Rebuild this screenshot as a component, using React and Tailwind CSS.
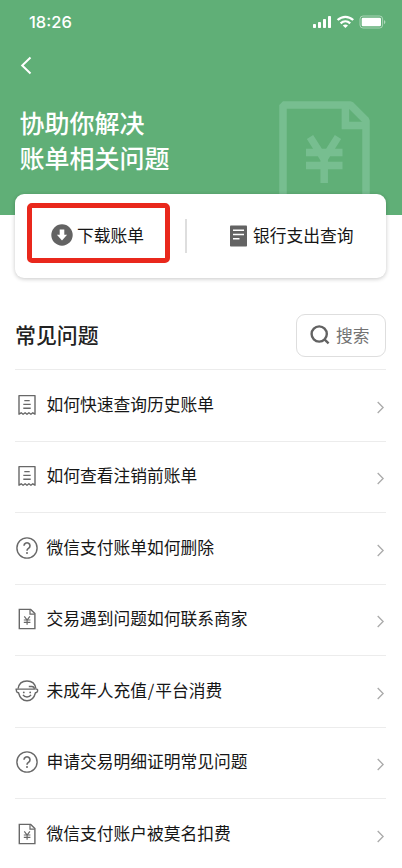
import React from 'react';

const questions = [
  { icon: 'receipt', label: '如何快速查询历史账单' },
  { icon: 'receipt', label: '如何查看注销前账单' },
  { icon: 'help', label: '微信支付账单如何删除' },
  { icon: 'file', label: '交易遇到问题如何联系商家' },
  { icon: 'kid', label: '未成年人充值/平台消费' },
  { icon: 'help', label: '申请交易明细证明常见问题' },
  { icon: 'file', label: '微信支付账户被莫名扣费' },
];

function ReceiptIcon() {
  return (
    <svg width="24" height="24" viewBox="0 0 24 24" fill="none" stroke="#686868" strokeWidth="1.4">
      <path d="M4 21.2V2.6h16v18.6l-2.2-1.4-1.9 1.5-2-1.5-1.9 1.5-1.9-1.5-2 1.5-1.9-1.5z" strokeLinejoin="round" />
      <path d="M9.3 7.6h5.4M8.3 11.4h7.4M8.3 15.2h7.4" />
    </svg>
  );
}

function HelpIcon() {
  return (
    <svg width="24" height="24" viewBox="0 0 24 24" fill="none" stroke="#686868" strokeWidth="1.4">
      <circle cx="12" cy="12" r="10.1" />
      <path d="M9 9.8a3 3 0 1 1 4.5 2.6c-1 .6-1.5 1.1-1.5 2.3" strokeWidth="1.6" />
      <circle cx="12" cy="17.1" r="1" fill="#686868" stroke="none" />
    </svg>
  );
}

function FileIcon() {
  return (
    <svg width="24" height="24" viewBox="0 0 24 24" fill="none" stroke="#686868" strokeWidth="1.4">
      <path d="M4.3 2.4h11.4l4.2 4.2v15H4.3z" />
      <path d="M15 2.6v4.6h4.7" strokeWidth="1.2" />
      <path d="M9.3 9.4l2.8 3.6 2.8-3.6M8.8 13h6.6M8.8 15.3h6.6M12.1 13v4.7" strokeWidth="1.2" />
    </svg>
  );
}

function KidIcon() {
  return (
    <svg width="24" height="24" viewBox="0 0 24 24" fill="none" stroke="#686868" strokeWidth="1.4">
      <path d="M3.1 9.7C3.8 4.8 7.3 2 12 2s8.2 2.8 8.9 7.7" />
      <path d="M.6 10.1h18.7c.1-1.8-.9-2.6-2.5-2.6h-3" />
      <path d="M20.3 10.1h1.2c1.2 0 1.3 1.1 1 2.1-.3 1-1 1.5-2 1.5-1.2 4.6-4.2 8-8.5 8s-7.3-3.4-8.5-8c-1 0-1.7-.5-2-1.5-.2-.9-.3-1.7-.1-2.2" />
      <path d="M8 15.9c1.6 2.8 6.4 2.8 8 0" />
      <circle cx="8.8" cy="13.4" r=".9" fill="#686868" stroke="none" />
      <circle cx="15.2" cy="13.4" r=".9" fill="#686868" stroke="none" />
    </svg>
  );
}

const icons = { receipt: ReceiptIcon, help: HelpIcon, file: FileIcon, kid: KidIcon };

function StatusBar() {
  return (
    <div className="flex h-11 items-center justify-between pl-[29px] pr-4">
      <span className="font-['Inter'] text-[16.5px] font-medium leading-none">18:26</span>
      <svg width="73" height="14" viewBox="0 0 73 14" fill="#fff">
        <rect x="0" y="9" width="3" height="4" rx=".7" />
        <rect x="5" y="7" width="3" height="6" rx=".7" />
        <rect x="10" y="4" width="3" height="9" rx=".7" />
        <rect x="15" y="1" width="3" height="12" rx=".7" />
        <g fill="none" stroke="#fff" strokeWidth="2.3">
          <path d="M24.6 5c4.6-4.3 11-4.3 15.6 0" />
          <path d="M27.6 8.3c2.9-2.7 6.7-2.7 9.6 0" />
        </g>
        <path d="M32.4 13l-2.6-2.6c1.4-1.3 3.8-1.3 5.2 0z" />
        <rect x="47" y="1" width="22.6" height="12" rx="3" fill="none" stroke="#fff" strokeOpacity=".45" />
        <rect x="48.7" y="2.7" width="19.3" height="8.6" rx="1.2" />
        <path d="M71 5c1.9.8 1.9 3.4 0 4.2z" fillOpacity=".5" />
      </svg>
    </div>
  );
}

function Header() {
  return (
    <header className="relative h-[215px] overflow-hidden bg-[#60af77] text-white">
      <svg className="absolute left-[279px] top-[101px]" width="92" height="114" viewBox="0 0 92 114" fill="none" stroke="#77be90" strokeWidth="7.5">
        <path d="M4 114V4h67.5L87 19.5V114" strokeLinejoin="bevel" />
        <path d="M66.4 4v20.6H87" />
        <path d="M31 36l14 22 14-22M27 51.5h36.5M27 64.5h36.5M45.2 52v30" />
      </svg>
      <StatusBar />
      <svg className="mt-3 ml-5" width="12" height="19" viewBox="0 0 12 19" fill="none" stroke="#fff" strokeWidth="2">
        <path d="M10.5 1.5l-8.3 8 8.3 8" />
      </svg>
      <h1 className="mt-[30px] ml-[19.5px] text-[25px] font-medium leading-[35px]">
        协助你解决
        <br />
        账单相关问题
      </h1>
    </header>
  );
}

function ActionCard() {
  return (
    <section className="relative mr-4 ml-[15px] -mt-[21px] flex h-[84px] items-center rounded-[9px] bg-white shadow-[0_1px_4px_rgba(0,0,0,0.22)]">
      <button className="ml-3 -mt-[7px] flex h-[60px] w-[143px] items-center rounded-[5px] border-[5px] border-[#e9281c] pt-[5px] pl-[19px]">
        <svg width="22" height="22" viewBox="0 0 22 22">
          <circle cx="11" cy="11" r="10.7" fill="#636363" />
          <path d="M8.7 5.4h4.6v5.4h2.8L11 16.5l-5.1-5.7h2.8z" fill="#fff" />
        </svg>
        <span className="-mt-px ml-1 whitespace-nowrap">下载账单</span>
      </button>
      <div className="ml-[15px] h-[34px] w-[1.5px] bg-[#dedede]" />
      <button className="-mt-px ml-[43px] flex items-center">
        <svg width="17" height="22" viewBox="0 0 17 22">
          <rect y=".5" width="17" height="21" rx=".8" fill="#636363" />
          <path d="M3 5.3h11M3 9.5h11M3 13.8h6.5" stroke="#fff" strokeWidth="1.4" />
        </svg>
        <span className="-mt-px ml-[6.5px] whitespace-nowrap">银行支出查询</span>
      </button>
    </section>
  );
}

export default function App() {
  return (
    <div className="h-[868px] w-[402px] overflow-hidden bg-white font-['Noto_Sans_CJK_SC',sans-serif] text-[16.75px] leading-6 text-[#161616]">
      <Header />
      <ActionCard />

      <main className="mr-4 ml-[15px] mt-9">
        <div className="flex h-[43px] items-center justify-between">
          <h2 className="-mt-[3px] text-[20.9px] font-medium text-[#222]">常见问题</h2>
          <button className="flex h-[43px] w-[90px] items-center rounded-[9px] border border-[#dedede] pl-3 text-[#737373]">
            <svg className="-mt-px" width="22" height="22" viewBox="0 0 22 22" fill="none" stroke="#626262" strokeWidth="2.4">
              <circle cx="10.2" cy="10" r="7.6" />
              <path d="M15.2 15.2l4.4 4.1" />
            </svg>
            <span className="-mt-[2px] ml-[5px]">搜索</span>
          </button>
        </div>

        <ul className="mt-3">
          {questions.map((item) => {
            const Icon = icons[item.icon];
            return (
              <li key={item.label} className="flex h-[71.5px] items-center border-t border-[#ececec]">
                <span className="-ml-[0.5px] -mt-px">
                  <Icon />
                </span>
                <span className="-mt-[3px] ml-2">
                  {item.label.split('/').map((part, i) => (
                    <React.Fragment key={part}>
                      {i > 0 && <span className="px-[0.8px]">/</span>}
                      {part}
                    </React.Fragment>
                  ))}
                </span>
                <svg className="mt-[4px] mr-[1.5px] ml-auto" width="9" height="13" viewBox="0 0 9 13" fill="none" stroke="#aaa" strokeWidth="1.3">
                  <path d="M1.7 1l5.4 5.5L1.7 12" />
                </svg>
              </li>
            );
          })}
        </ul>
      </main>
    </div>
  );
}
